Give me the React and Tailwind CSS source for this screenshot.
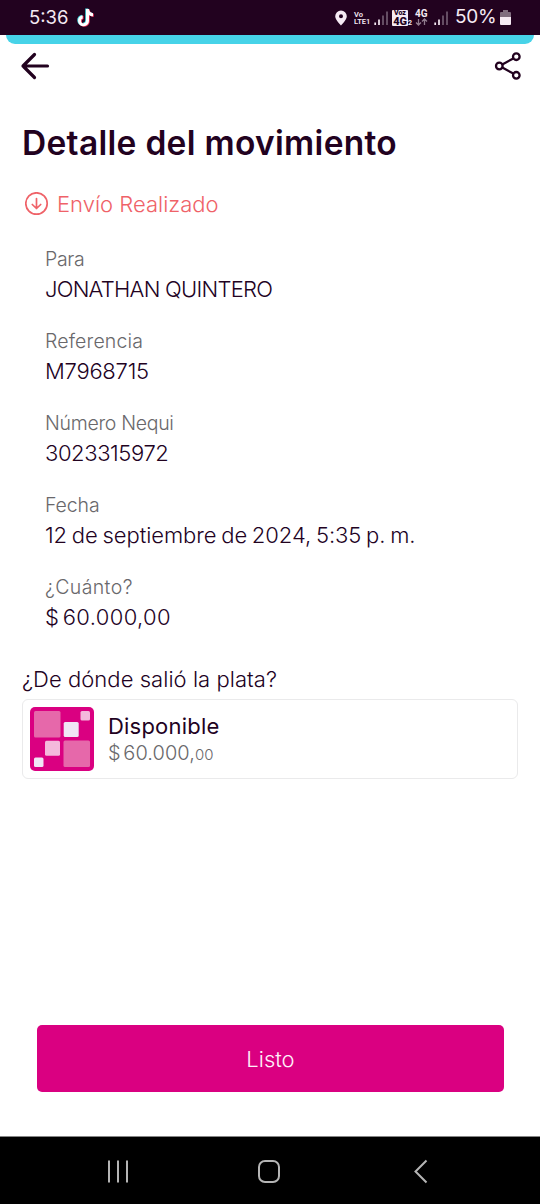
const details = [
  { label: "Para", value: "JONATHAN QUINTERO", labelClass: "tracking-[-0.3px]", valueClass: "tracking-[-0.75px]" },
  { label: "Referencia", value: "M7968715", labelClass: "tracking-[0.15px]", valueClass: "tracking-[-0.25px]" },
  { label: "Número Nequi", value: "3023315972", labelClass: "tracking-[-0.3px]", valueClass: "tracking-[-0.4px]" },
  { label: "Fecha", value: "12 de septiembre de 2024, 5:35 p. m.", labelClass: "tracking-[-0.1px]", valueClass: "tracking-[-0.05px] [word-spacing:-1.4px]" },
  { label: "¿Cuánto?", value: "$ 60.000,00", labelClass: "tracking-[0.4px]", valueClass: "tracking-[0.35px] [word-spacing:-3px]" },
];

function TikTokIcon() {
  const note = "M9 1h3c.2 2.4 1.700 4 4 4.300v3c-1.600 0-3-.5-4-1.300v5.700A5.500 5.500 0 1 1 5.700 7.300v3.200a2.500 2.500 0 1 0 3.300 2.300z";
  return (
    <svg className="ml-[5px] h-[21px] w-[19px]" viewBox="0 0 19 21">
      <path d={note} fill="#43d7e0" transform="translate(.2 .5)" />
      <path d={note} fill="#ef3058" transform="translate(1.8 1.500)" />
      <path d={note} fill="#fff" transform="translate(1 1)" />
    </svg>
  );
}

function Signal({ className }) {
  return (
    <svg className={className} viewBox="0 0 15 16">
      <path d="M1.200 12.500v2.500M5 9.500V15" stroke="#f5eaf3" strokeWidth="1.700" />
      <path d="M9 5.500V15M13 1.500V15" stroke="#765f74" strokeWidth="1.600" />
    </svg>
  );
}

function StatusBar() {
  return (
    <div className="flex h-[35px] items-center bg-[#22021f] pl-[29px] text-[#f5eaf3]">
      <span className="w-[42px] text-[18.500px] whitespace-nowrap">5:36</span>
      <TikTokIcon />
      <svg className="ml-[240px] h-4 w-3 shrink-0" viewBox="0 0 12 16">
        <path fillRule="evenodd" fill="#f5eaf3" d="M6 .5A5.800 5.800 0 0 0 .2 6.300C.2 10 6 15.500 6 15.500S11.800 10 11.800 6.300A5.800 5.800 0 0 0 6 .5Zm0 3.700a2 2 0 1 1 0 4 2 2 0 0 1 0-4Z" />
      </svg>
      <div className="ml-[7px] w-[18px] shrink-0 pt-px font-['Roboto',sans-serif] text-[7.500px] leading-[7px] font-semibold whitespace-nowrap">
        <div>Vo</div>
        <div>LTE1</div>
      </div>
      <Signal className="ml-[2px] h-4 w-[15px] shrink-0" />
      <div className="ml-[3px] flex shrink-0 items-end">
        <div className="h-4 w-4 rounded-[1px] bg-[#f5eaf3] text-center font-['Roboto',sans-serif] font-black text-[#22021f]">
          <div className="text-[7px] leading-[7px]">Voz</div>
          <div className="text-[11px] leading-[9px] tracking-[-0.2px]">4G</div>
        </div>
        <span className="w-1 font-['Roboto',sans-serif] text-[7px] leading-[6px] font-bold">2</span>
      </div>
      <div className="ml-[3px] w-[15px] shrink-0">
        <div className="font-['Roboto',sans-serif] text-[10px] leading-[8px] font-bold">4G</div>
        <svg className="h-2 w-[13px]" viewBox="0 0 13 8" fill="none" stroke="#907b8e" strokeWidth="1.300">
          <path d="M3.500 1v6M1 4.500 3.500 7 6 4.500M9.500 7V1M7 3.500 9.500 1 12 3.500" />
        </svg>
      </div>
      <Signal className="ml-[4px] h-4 w-[15px] shrink-0" />
      <span className="ml-[6px] w-[43px] shrink-0 text-[19px] whitespace-nowrap tracking-[-0.3px]">50%</span>
      <svg className="ml-[2px] h-[15px] w-[11px] shrink-0" viewBox="0 0 11 15">
        <path d="M3 0h5v2h2q1 0 1 1v4H0V3q0-1 1-1h2Z" fill="#806d7e" />
        <path d="M0 7h11v7q0 1-1 1H1q-1 0-1-1Z" fill="#f5eaf3" />
      </svg>
    </div>
  );
}

function Header() {
  return (
    <header className="flex h-[44px] items-center justify-between pr-[18px] pl-[20px]">
      <svg className="h-[28px] w-[30px]" viewBox="0 0 30 28" fill="none" stroke="#22021f" strokeWidth="3.200" strokeLinecap="round" strokeLinejoin="round">
        <path d="M27.500 14H3M14.500 2.500 3 14l11.500 11.500" />
      </svg>
      <svg className="h-[28px] w-[28px]" viewBox="0 0 28 28" fill="none" stroke="#22021f" strokeWidth="2.300">
        <circle cx="5.300" cy="14" r="3.300" />
        <circle cx="22.300" cy="4.700" r="3.300" />
        <circle cx="22.300" cy="23.300" r="3.300" />
        <path d="m8.300 12.400 11-6M8.300 15.600l11 6" />
      </svg>
    </header>
  );
}

function PocketIcon() {
  return (
    <svg className="h-16 w-16 shrink-0" viewBox="0 0 64 64">
      <rect width="64" height="64" rx="5" fill="#da0081" />
      <rect x="4" y="4" width="26.500" height="26.500" rx="1.500" fill="#e668aa" />
      <rect x="33.500" y="33.500" width="26.500" height="26.500" rx="1.500" fill="#e668aa" />
      <rect x="50.500" y="4" width="9.500" height="9.500" rx="1.500" fill="#f4b9dc" />
      <rect x="33.700" y="15" width="15" height="15" rx="1.500" fill="#f0e6f5" />
      <rect x="15" y="33.700" width="15" height="15" rx="1.500" fill="#f4b9dc" />
      <rect x="4" y="50.500" width="9.500" height="9.500" rx="1.500" fill="#f0e6f5" />
    </svg>
  );
}

export default function App() {
  return (
    <div className="flex h-[1204px] w-[540px] flex-col overflow-hidden bg-white font-['Inter',sans-serif] text-[#22021f]">
      <StatusBar />
      <div className="mx-[6px] h-[9px] shrink-0 rounded-b-[9px] bg-[#47d3e8]" />
      <Header />
      <main className="flex grow flex-col">
        <h1 className="mt-[35px] h-10 pl-[22px] text-[33.500px] leading-10 font-semibold whitespace-nowrap tracking-[0.3px]">Detalle del movimiento</h1>
        <div className="mt-[25px] flex h-8 items-center pl-[25px] text-[#ef6268]">
          <svg className="h-6 w-6" viewBox="0 0 24 24" fill="none" stroke="currentColor" strokeWidth="1.700" strokeLinecap="round" strokeLinejoin="round">
            <circle cx="11.500" cy="11.500" r="10.700" />
            <path d="M11.500 6.500v10M7.300 12.500l4.200 4 4.200-4" />
          </svg>
          <span className="ml-[8px] text-[22px] leading-8 font-light whitespace-nowrap">Envío Realizado</span>
        </div>
        <dl className="mt-[24px] flex flex-col gap-[22px] pl-[45px] whitespace-nowrap">
          {details.map((d) => (
            <div key={d.label} className="leading-[30px]">
              <dt className={`text-[19.500px] font-light text-[#69686b] ${d.labelClass}`}>{d.label}</dt>
              <dd className={`text-[22px] font-light ${d.valueClass}`}>{d.value}</dd>
            </div>
          ))}
        </dl>
        <h2 className="mt-[32px] h-[30px] pl-[22px] text-[22px] leading-[30px] font-light whitespace-nowrap tracking-[0.05px]">¿De dónde salió la plata?</h2>
        <section className="mt-[5px] mr-[22px] ml-[22px] flex h-[80px] items-center rounded-[6px] border-[1.500px] border-[#eaeaeb] pl-[7px]">
          <PocketIcon />
          <div className="ml-[14px] pt-[2px] whitespace-nowrap">
            <div className="text-[22px] leading-[27px] tracking-[0.2px]">Disponible</div>
            <div className="text-[20px] leading-[27px] font-light tracking-[0.05px] text-[#69686b] [word-spacing:-3px]">$ 60.000,<span className="text-[15px]">00</span></div>
          </div>
        </section>
        <button className="mt-auto mr-[36px] mb-[44px] ml-[37px] h-[67px] rounded-[5px] bg-[#da0081] pt-[2px] text-[22px] font-light text-[#fff0fa]">Listo</button>
      </main>
      <nav className="flex h-[68px] shrink-0 border-t border-[#858585] bg-black">
        <svg className="h-full w-full" viewBox="0 0 540 67" fill="none" stroke="#b5b5b5" strokeWidth="2">
          <path d="M109 23.500v22M118 23.500v22M127 23.500v22" />
          <rect x="259" y="24" width="20" height="21" rx="6" />
          <path d="M426.500 23.500 415.500 34.500l11 11" />
        </svg>
      </nav>
    </div>
  );
}
